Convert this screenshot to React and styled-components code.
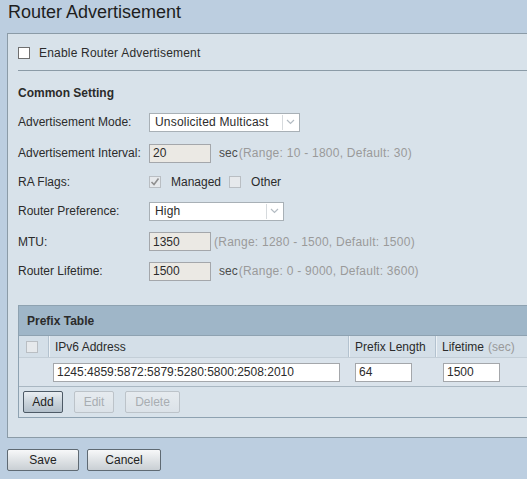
import React from 'react';
import styled, { createGlobalStyle, css } from 'styled-components';

const GlobalStyle = createGlobalStyle`
  body {
    margin: 0;
    background: #bccee0;
    font-family: "Liberation Sans", Arial, sans-serif;
    font-size: 12px;
    color: #2b2b2b;
    overflow: hidden;
  }
`;

const Page = styled.div`
  width: 580px;
  padding-left: 7px;
`;

const Title = styled.h1`
  margin: 0;
  height: 33px;
  padding: 2px 0 0 1px;
  box-sizing: border-box;
  font-size: 18px;
  font-weight: normal;
  color: #1e1e1e;
`;

const Panel = styled.div`
  border: 1px solid #8b9ba7;
  background: #d8e2ea;
  padding: 0 0 19px 10px;
`;

const EnableRow = styled.label`
  display: flex;
  align-items: center;
  gap: 9px;
  height: 37px;
  padding-top: 1px;
  box-sizing: border-box;
  letter-spacing: 0.2px;
  border-bottom: 1px solid #8b9ba7;
`;

const Heading = styled.div`
  font-weight: bold;
  height: 35px;
  padding-top: 15px;
  box-sizing: border-box;
`;

const Row = styled.div`
  display: flex;
  align-items: center;
  height: ${(p) => p.h}px;
`;

const Label = styled.span`
  width: 131px;
  flex: none;
`;

const Box = styled.span`
  width: 12px;
  height: 12px;
  box-sizing: border-box;
  flex: none;
  display: inline-flex;
  align-items: center;
  justify-content: center;
  background: #fff;
  border: 1px solid #6f6f6f;
  ${(p) =>
    p.disabled &&
    css`
      background: #e6e9ec;
      border-color: #b9bec3;
    `}
`;

const Select = styled.div`
  width: ${(p) => p.w}px;
  height: 19px;
  box-sizing: border-box;
  background: #fff;
  border: 1px solid #a8b0b6;
  display: flex;
  align-items: center;
  padding-left: 5px;
  letter-spacing: 0.2px;
  position: relative;
`;

const Arrow = styled.span`
  position: absolute;
  right: 1px;
  top: 1px;
  bottom: 1px;
  width: 15px;
  border-left: 1px solid #d6dadd;
  display: flex;
  align-items: center;
  justify-content: center;
`;

const Input = styled.div`
  width: ${(p) => p.w}px;
  height: 19px;
  box-sizing: border-box;
  border: 1px solid #a4a7ab;
  background: ${(p) => (p.disabled ? '#ebe9e4' : '#fff')};
  display: flex;
  align-items: center;
  padding-left: 3px;
  flex: none;
`;

const Unit = styled.span`
  color: #4c4c4c;
  margin-left: 8px;
`;

const Hint = styled.span`
  color: #9a9a9a;
  letter-spacing: 0.25px;
  margin-left: ${(p) => p.ml || 1}px;
`;

const Flag = styled.span`
  margin: 0 8px 0 10px;
`;

const Table = styled.div`
  margin-top: 20px;
  border: 1px solid #8ea2b1;
  border-right: none;
`;

const TableTitle = styled.div`
  height: 30px;
  background: #9fb6c8;
  display: flex;
  align-items: center;
  padding: 1px 0 0 8px;
  box-sizing: border-box;
  font-weight: bold;
  border-bottom: 1px solid #8ea2b1;
`;

const Cols = styled.div`
  display: grid;
  grid-template-columns: 30px 300px 87px 1fr;
  height: ${(p) => p.h}px;
  background: ${(p) => p.bg};
  border-bottom: 1px solid ${(p) => p.line || '#c3ced7'};
`;

const Cell = styled.div`
  display: flex;
  align-items: center;
  padding-left: ${(p) => p.pl || 6}px;
  ${(p) =>
    p.sep &&
    css`
      border-right: 1px solid #b3c2cf;
      box-shadow: 1px 0 0 #edf2f6;
    `}
`;

const Muted = styled.span`
  color: #9a9a9a;
  margin-left: 4px;
`;

const ButtonRow = styled.div`
  display: flex;
  align-items: center;
  gap: 11px;
  height: 30px;
  padding-left: 4px;
`;

const Button = styled.button`
  font-family: inherit;
  font-size: 12px;
  height: 22px;
  width: ${(p) => p.w}px;
  padding: 0;
  border-radius: 2px;
  border: 1px solid #5f6a73;
  color: #222;
  background: linear-gradient(#f7f8f9, #dde1e4 55%, #c9cfd4);
  ${(p) =>
    p.active &&
    css`
      border-color: #4d5a66;
      background: linear-gradient(#e9eef2, #c8d2da 55%, #b2bfca);
    `}
  ${(p) =>
    p.disabled &&
    css`
      color: #a8adb2;
      border-color: #bcc3c9;
      background: linear-gradient(#e6ebef, #dbe2e8);
    `}
`;

const Footer = styled.div`
  display: flex;
  gap: 8px;
  margin-top: 11px;
`;

const Check = ({ color }) => (
  <svg width="10" height="10" viewBox="0 0 10 10">
    <path d="M1.5 5 L4 7.5 L8.5 1.5" fill="none" stroke={color} strokeWidth="1.6" />
  </svg>
);

const Chevron = () => (
  <svg width="9" height="6" viewBox="0 0 9 6">
    <path d="M1 1 L4.5 4.5 L8 1" fill="none" stroke="#b4bcc3" strokeWidth="1.2" />
  </svg>
);

export default function App() {
  return (
    <Page>
      <GlobalStyle />
      <Title>Router Advertisement</Title>
      <Panel>
        <EnableRow>
          <Box />
          Enable Router Advertisement
        </EnableRow>
        <Heading>Common Setting</Heading>
        <Row h={32}>
          <Label>Advertisement Mode:</Label>
          <Select w={151}>
            Unsolicited Multicast
            <Arrow>
              <Chevron />
            </Arrow>
          </Select>
        </Row>
        <Row h={30}>
          <Label>Advertisement Interval:</Label>
          <Input w={62} disabled>20</Input>
          <Unit>sec</Unit>
          <Hint>(Range: 10 - 1800, Default: 30)</Hint>
        </Row>
        <Row h={28}>
          <Label>RA Flags:</Label>
          <Box disabled>
            <Check color="#8f8f8f" />
          </Box>
          <Flag>Managed</Flag>
          <Box disabled />
          <Flag>Other</Flag>
        </Row>
        <Row h={30}>
          <Label>Router Preference:</Label>
          <Select w={135}>
            High
            <Arrow>
              <Chevron />
            </Arrow>
          </Select>
        </Row>
        <Row h={31}>
          <Label>MTU:</Label>
          <Input w={62} disabled>1350</Input>
          <Hint ml={3}>(Range: 1280 - 1500, Default: 1500)</Hint>
        </Row>
        <Row h={28}>
          <Label>Router Lifetime:</Label>
          <Input w={62} disabled>1500</Input>
          <Unit>sec</Unit>
          <Hint>(Range: 0 - 9000, Default: 3600)</Hint>
        </Row>

        <Table>
          <TableTitle>Prefix Table</TableTitle>
          <Cols h={21} bg="#d4dfe8">
            <Cell sep pl={7}>
              <Box disabled />
            </Cell>
            <Cell sep>IPv6 Address</Cell>
            <Cell sep>Prefix Length</Cell>
            <Cell>
              Lifetime<Muted>(sec)</Muted>
            </Cell>
          </Cols>
          <Cols h={28} bg="#dae3eb" line="#a9b7c2">
            <Cell />
            <Cell pl={4}>
              <Input w={287}>1245:4859:5872:5879:5280:5800:2508:2010</Input>
            </Cell>
            <Cell>
              <Input w={57}>64</Input>
            </Cell>
            <Cell pl={7}>
              <Input w={57}>1500</Input>
            </Cell>
          </Cols>
          <ButtonRow>
            <Button w={40} active>Add</Button>
            <Button w={40} disabled>Edit</Button>
            <Button w={55} disabled>Delete</Button>
          </ButtonRow>
        </Table>
      </Panel>
      <Footer>
        <Button w={72}>Save</Button>
        <Button w={74}>Cancel</Button>
      </Footer>
    </Page>
  );
}
